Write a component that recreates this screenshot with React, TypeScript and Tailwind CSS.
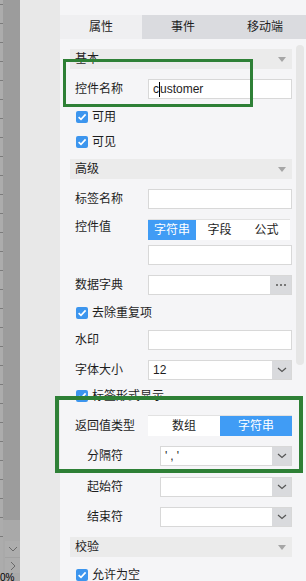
import React from 'react';

// --- Small building blocks ---
const Chevron = () => (
  <svg width="10" height="6" viewBox="0 0 10 6">
    <path d="M1 1 L5 4.5 L9 1" stroke="#555" strokeWidth="1.2" fill="none" />
  </svg>
);

const Header = ({ title, className = '' }: { title: string; className?: string }) => (
  <div className={`flex items-center justify-between h-[20px] bg-[#ebebeb] pl-[5px] pr-[6px] ${className}`}>
    <span>{title}</span>
    <span className="w-0 h-0 border-l-[4px] border-r-[4px] border-t-[5px] border-l-transparent border-r-transparent border-t-[#a6a6a6]" />
  </div>
);

const CheckRow = ({ label, className = '' }: { label: string; className?: string }) => (
  <div className={`flex items-center h-[20px] pl-[6px] ${className}`}>
    <span className="flex items-center justify-center w-[12px] h-[12px] rounded-[2px] bg-[#3c95ee]">
      <svg width="10" height="10" viewBox="0 0 10 10">
        <path d="M1.6 5.1 L4 7.4 L8.6 2.4" stroke="white" strokeWidth="1.6" fill="none" />
      </svg>
    </span>
    <span className="ml-[4px]">{label}</span>
  </div>
);

const Input = ({ children }: { children?: React.ReactNode }) => (
  <div className="flex-1 h-[20px] bg-white border border-[#d8d8d8] flex items-center pl-[4px]">{children}</div>
);

const Select = ({ value, valueClass = '' }: { value?: string; valueClass?: string }) => (
  <div className="flex-1 h-[20px] bg-white border border-[#d8d8d8] flex items-center">
    <span className={`flex-1 pl-[4px] ${valueClass}`}>{value}</span>
    <span className="w-[19px] h-full bg-[#d9dadd] flex items-center justify-center">
      <Chevron />
    </span>
  </div>
);

const FieldRow = ({ label, className = '', children }: { label: string; className?: string; children: React.ReactNode }) => (
  <div className={`flex items-center h-[20px] ${className}`}>
    <span className="w-[78px] pl-[5px] shrink-0">{label}</span>
    {children}
  </div>
);

const SubRow = ({ label, className = '' }: { label: string; className?: string }) => (
  <div className={`flex items-center h-[20px] ${className}`}>
    <span className="w-[90px] pl-[17px] shrink-0">{label}</span>
    <Select />
  </div>
);

// --- Left ruler strip ---
const Ruler = () => (
  <div className="flex w-[20px] h-full shrink-0">
    <div className="w-[3px] h-full bg-[#acacac] flex flex-col pt-[4px] gap-[18px]">
      {Array.from({ length: 29 }).map((_, i) => (
        <div key={i} className="h-[1px] w-[3px] bg-[#7c7c7c]" />
      ))}
    </div>
    <div className="w-[17px] h-full flex flex-col">
      <div className="h-[520px] bg-[#9c9c9c]" />
      <div className="flex-1 bg-[#a9a9a9] pt-[21px] pl-[2px] flex flex-col">
        <div className="h-[16px] bg-[#adadad] flex items-center justify-center">
          <svg width="10" height="6" viewBox="0 0 10 6">
            <path d="M1 1 L5 5 L9 1" stroke="#6a6a6a" strokeWidth="1" fill="none" />
          </svg>
        </div>
        <div className="h-[16px] bg-[#adadad] flex items-center justify-center border-t border-[#a2a2a2]">
          <svg width="6" height="10" viewBox="0 0 6 10">
            <path d="M1 1 L5 5 L1 9" stroke="#6a6a6a" strokeWidth="1" fill="none" />
          </svg>
        </div>
      </div>
    </div>
  </div>
);

export default function App() {
  return (
    <div
      className="relative flex w-[306px] h-[581px] overflow-hidden text-[12px] leading-[14px] text-[#1e1e1e]"
      style={{ fontFamily: '"Liberation Sans", "Noto Sans CJK SC", sans-serif' }}
    >
      <Ruler />
      <div className="w-[40px] h-full bg-[#e8e8e8] shrink-0" />

      {/* Property panel */}
      <div className="relative flex-1 h-full bg-[#f5f5f7] pt-[15px]">
        <div className="flex h-[24px]">
          <div className="w-[82px] flex items-center justify-center bg-[#efeff1]">属性</div>
          <div className="w-[82px] flex items-center justify-center bg-[#dadbdf]">事件</div>
          <div className="w-[82px] flex items-center justify-center bg-[#dadbdf]">移动端</div>
        </div>

        <div className="flex flex-col pl-[10px] pr-[14px]">
          <Header title="基本" className="mt-[10px]" />
          <FieldRow label="控件名称" className="mt-[10px]">
            <Input>
              <span>c</span>
              <span className="w-[1px] h-[15px] bg-black" />
              <span>ustomer</span>
            </Input>
          </FieldRow>
          <CheckRow label="可用" className="mt-[8px]" />
          <CheckRow label="可见" className="mt-[5px]" />

          <Header title="高级" className="mt-[7px]" />
          <FieldRow label="标签名称" className="mt-[10px]">
            <Input />
          </FieldRow>
          <div className="flex items-start h-[21px] mt-[10px]">
            <span className="w-[78px] pl-[5px] shrink-0 mt-[1px]">控件值</span>
            <div className="flex h-full w-[142px] border-t border-[#e2e2e2] bg-white">
              <span className="w-[48px] flex items-center justify-center bg-[#409cf5] text-white">字符串</span>
              <span className="w-[47px] flex items-center justify-center">字段</span>
              <span className="w-[47px] flex items-center justify-center">公式</span>
            </div>
          </div>
          <div className="flex h-[20px] mt-[5px]">
            <span className="w-[78px] shrink-0" />
            <Input />
          </div>
          <FieldRow label="数据字典" className="mt-[10px]">
            <div className="flex-1 h-[20px] bg-white border border-[#d8d8d8] flex">
              <span className="flex-1" />
              <span className="w-[21px] h-full bg-[#d9dadd] flex items-center justify-center gap-[2px]">
                <span className="w-[2px] h-[2px] bg-[#777]" />
                <span className="w-[2px] h-[2px] bg-[#777]" />
                <span className="w-[2px] h-[2px] bg-[#777]" />
              </span>
            </div>
          </FieldRow>
          <CheckRow label="去除重复项" className="mt-[8px]" />
          <FieldRow label="水印" className="mt-[7px]">
            <Input />
          </FieldRow>
          <FieldRow label="字体大小" className="mt-[10px]">
            <Select value="12" />
          </FieldRow>
          <CheckRow label="标签形式显示" className="mt-[6px]" />

          <div className="flex items-center h-[21px] mt-[9px]">
            <span className="w-[78px] pl-[5px] shrink-0">返回值类型</span>
            <div className="flex h-full flex-1 border-t border-[#e2e2e2] bg-white">
              <span className="w-[72px] flex items-center justify-center">数组</span>
              <span className="flex-1 flex items-center justify-center bg-[#409cf5] text-white">字符串</span>
            </div>
          </div>
          <div className="flex items-center h-[20px] mt-[10px]">
            <span className="w-[90px] pl-[17px] shrink-0">分隔符</span>
            <Select value="','" valueClass="tracking-[3px]" />
          </div>
          <SubRow label="起始符" className="mt-[11px]" />
          <SubRow label="结束符" className="mt-[10px]" />

          <Header title="校验" className="mt-[10px]" />
          <CheckRow label="允许为空" className="mt-[8px]" />
        </div>

        {/* scrollbar */}
        <div className="absolute left-[236px] top-[45px] w-[8px] h-[320px] rounded-full bg-[#e6e6e6]" />
      </div>

      {/* annotation boxes */}
      <div className="absolute left-[63px] top-[59px] w-[190px] h-[48px] border-[3px] border-[#2e8036]" />
      <div className="absolute left-[55px] top-[396px] w-[248px] h-[77px] border-[4px] border-[#2e8036]" />

      <span className="absolute left-0 top-[573px] text-[10px] leading-[10px] text-black">0%</span>
    </div>
  );
}
